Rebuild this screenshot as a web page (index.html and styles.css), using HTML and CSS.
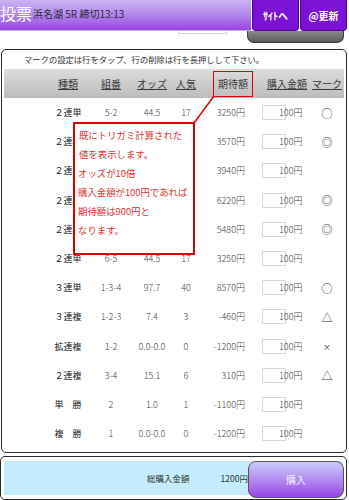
FILE: index.html
```html
<!DOCTYPE html>
<html lang="ja">
<head>
    <meta charset="UTF-8">
    <meta name="viewport" content="width=device-width, initial-scale=1.0">
    <title>投票</title>
    <link rel="stylesheet" href="styles.css">
</head>
<body>
    <div class="topbar">
        <div class="titlebar">
            <span class="title">投票</span>
            <span class="race">浜名湖 5R 締切13:13</span>
        </div>
        <button class="navbtn">ｻｲﾄへ</button>
        <button class="navbtn">@更新</button>
    </div>
    <div class="subbar">
        <div class="tab"></div>
        <div class="shelf"></div>
    </div>

    <div class="panel">
        <p class="note">マークの設定は行をタップ、行の削除は行を長押しして下さい。</p>
        <div class="head">
            <span></span>
            <span class="hcell">種類</span>
            <span class="hcell">組番</span>
            <span class="hcell">オッズ</span>
            <span class="hcell">人気</span>
            <span class="hcell"><span class="hilite">期待額</span></span>
            <span class="hcell">購入金額</span>
            <span class="hcell">マーク</span>
        </div>
        <div id="rows"></div>
    </div>

    <div class="footer">
        <div class="totalbar">
            <span class="total-label">総購入金額</span>
            <span class="total-value">1200円</span>
            <button class="buy">購入</button>
        </div>
    </div>

    <!-- callout over the table -->
    <svg class="callout-line" width="30" height="32" viewBox="0 0 30 32">
        <line x1="4" y1="29" x2="24" y2="2" stroke="#e00000" stroke-width="1.5"/>
    </svg>
    <div class="callout">
        <p>既にトリガミ計算された</p>
        <p>値を表示します。</p>
        <p>オッズが10倍</p>
        <p>購入金額が100円であれば</p>
        <p>期待額は900円と</p>
        <p>なります。</p>
    </div>

    <script>
        // rows 2-5 sit under the callout, so only the parts that show are filled
        const bets = [
            ['２連単', '5-2', '44.5', '17', '3250円', '○'],
            ['２連単', '', '', '', '3570円', '◎'],
            ['２連単', '', '', '', '3940円', ''],
            ['２連単', '', '', '', '6220円', '◎'],
            ['２連単', '', '', '', '5480円', '◎'],
            ['２連単', '6-5', '44.5', '17', '3250円', ''],
            ['３連単', '1-3-4', '97.7', '40', '8570円', '○'],
            ['３連複', '1-2-3', '7.4', '3', '-460円', '△'],
            ['拡連複', '1-2', '0.0-0.0', '0', '-1200円', '×'],
            ['２連複', '3-4', '15.1', '6', '310円', '△'],
            ['単　勝', '2', '1.0', '1', '-1100円', ''],
            ['複　勝', '1', '0.0-0.0', '0', '-1200円', '']
        ];

        document.getElementById('rows').innerHTML = bets.map(b => `
            <div class="row">
                <span></span>
                <span class="kind">${b[0]}</span>
                <span class="num">${b[1]}</span>
                <span class="num">${b[2]}</span>
                <span class="num">${b[3]}</span>
                <span class="num expect">${b[4]}</span>
                <span class="amount"><span class="amount-box"></span><span class="amount-text">100円</span></span>
                <span class="mark${b[5] === '×' ? ' small' : ''}">${b[5]}</span>
            </div>
        `).join('');
    </script>
</body>
</html>
```

FILE: styles.css
```css
body {
    margin: 0;
    width: 349px;
    background: #ffffff;
    font-family: "Noto Sans CJK JP", "Noto Sans", sans-serif;
    color: #333;
}
p { margin: 0; }

.topbar {
    display: flex;
    height: 31px;
    position: relative;
    z-index: 2;
}
.titlebar {
    width: 251px;
    display: flex;
    align-items: center;
    gap: 1px;
    padding-bottom: 4px;
    box-sizing: border-box;
    background: linear-gradient(#cbb3f3, #b58cec 45%, #9a44e2);
    border-bottom: 1px solid #b9b9c9;
}
.title {
    color: #fff;
    font-size: 16px;
    line-height: 1;
}
.race {
    font-size: 10px;
    color: #2a2a3a;
}
.navbtn {
    width: 47px;
    height: 31px;
    margin-left: 1px;
    padding: 0;
    border: 1px solid #4a0a8a;
    border-top: none;
    border-radius: 0 0 4px 4px;
    background: #7b12d6;
    color: #fff;
    font-family: inherit;
    font-size: 10px;
    font-weight: bold;
}

.subbar {
    display: flex;
    height: 18px;
}
.tab {
    margin-left: 178px;
    margin-top: -3px;
    width: 49px;
    height: 6px;
    border: 1px solid #d4d4d4;
    box-sizing: border-box;
    background: #fff;
}
.shelf {
    margin-left: 20px;
    width: 97px;
    height: 12px;
    background: linear-gradient(#8a8a8a, #5c5c5c);
    border: 1px solid #3a3a3a;
    border-top: none;
    border-radius: 0 0 7px 7px;
    box-sizing: border-box;
}

.panel {
    margin-left: 1px;
    width: 346px;
    box-sizing: border-box;
    border: 1px solid #2c2c2c;
    border-radius: 5px;
    padding-bottom: 4px;
}
.note {
    height: 19px;
    line-height: 19px;
    padding-left: 22px;
    font-size: 8.3px;
    color: #333;
}

.head, .row {
    display: grid;
    grid-template-columns: 43px 42px 44px 38px 30px 62px 48px 32px;
    margin: 0 2px 0 2px;
    align-items: center;
}
.head {
    height: 29px;
    background: linear-gradient(#dcdcdc, #c9c9c9 60%, #bdbdbd);
}
.hcell {
    text-align: center;
    font-size: 10px;
    text-decoration: underline;
    white-space: nowrap;
    color: #3a3a3a;
}
.hilite {
    display: inline-block;
    padding: 4px 4px 5px;
    margin-left: 2px;
    border: 1.5px solid #e00000;
}

.row {
    height: 29.2px;
    font-size: 9px;
    white-space: nowrap;
}
.kind {
    text-align: center;
    font-size: 9px;
    color: #222;
}
.num {
    text-align: center;
    font-weight: 300;
    color: #444;
}
.expect {
    text-align: right;
    padding-right: 18px;
}
.amount {
    display: flex;
    align-items: center;
    font-weight: 300;
    color: #444;
}
.amount-box {
    width: 24px;
    height: 15px;
    margin-left: -1px;
    border: 1px solid #d6d6d6;
    box-sizing: border-box;
}
.amount-text {
    margin-left: -7px;
}
.mark {
    text-align: center;
    font-size: 11px;
    color: #333;
}
.mark.small { font-size: 8px; }

.footer {
    margin-top: 3px;
    width: 347px;
    height: 44px;
    box-sizing: border-box;
    border: 1px solid #2c2c2c;
    border-radius: 5px;
    padding: 4px 3px 0 3px;
}
.totalbar {
    height: 34px;
    background: #c3ecfe;
    display: flex;
    align-items: center;
    font-size: 8.5px;
    color: #333;
    white-space: nowrap;
}
.total-label { margin-left: 143px; }
.total-value { margin-left: 31px; }
.buy {
    align-self: flex-start;
    margin-left: auto;
    width: 96px;
    height: 37px;
    flex-shrink: 0;
    border: 1px solid #555;
    border-radius: 8px;
    background: linear-gradient(#c9ccfb, #b38cf1 50%, #9a44e4);
    color: #f4eeff;
    font-family: inherit;
    font-size: 10px;
    padding: 0;
}

.callout {
    position: absolute;
    left: 73px;
    top: 122px;
    width: 122px;
    height: 133px;
    box-sizing: border-box;
    border: 2px solid #dd0000;
    background: #fff;
    padding: 2px 0 0 3px;
    color: #e23030;
    font-size: 9.4px;
    line-height: 19px;
    z-index: 3;
}
.callout p:nth-child(-n+2) { padding-left: 1px; }
.callout-line {
    position: absolute;
    left: 190px;
    top: 94px;
    z-index: 3;
}
```
